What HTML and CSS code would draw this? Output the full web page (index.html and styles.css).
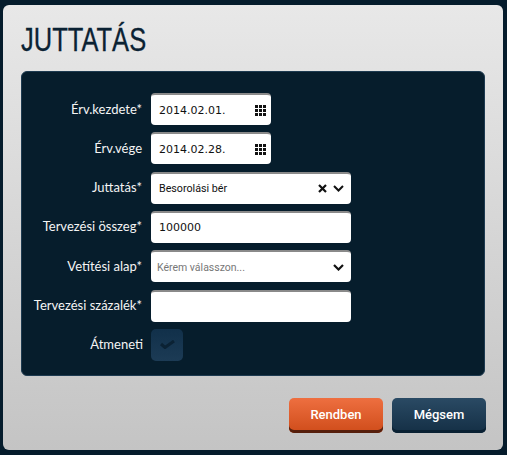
FILE: index.html
```html
<!DOCTYPE html>
<html>
<head>
    <title>Juttatás</title>
    <link rel="stylesheet" href="styles.css">
</head>
<body>
    <div class="modal">
        <h1>JUTTATÁS</h1>
        <form class="panel">
            <div class="row">
                <label>Érv.kezdete*</label>
                <div class="field short"><span class="value">2014.02.01.</span>
                    <svg class="icon" width="11" height="11" viewBox="0 0 11 11"><path d="M0 0h3v3H0zM4 0h3v3H4zM8 0h3v3H8zM0 4h3v3H0zM4 4h3v3H4zM8 4h3v3H8zM0 8h3v3H0zM4 8h3v3H4zM8 8h3v3H8z"/></svg>
                </div>
            </div>
            <div class="row">
                <label>Érv.vége</label>
                <div class="field short"><span class="value">2014.02.28.</span>
                    <svg class="icon" width="11" height="11" viewBox="0 0 11 11"><path d="M0 0h3v3H0zM4 0h3v3H4zM8 0h3v3H8zM0 4h3v3H0zM4 4h3v3H4zM8 4h3v3H8zM0 8h3v3H0zM4 8h3v3H4zM8 8h3v3H8z"/></svg>
                </div>
            </div>
            <div class="row">
                <label>Juttatás*</label>
                <div class="field"><span class="choice">Besorolási bér</span>
                    <svg class="icon" width="9" height="9" viewBox="0 0 9 9"><path d="M1 1l7 7M8 1L1 8" stroke="#111" stroke-width="2.2" fill="none"/></svg>
                    <svg class="icon chevron" width="11" height="7" viewBox="0 0 11 7"><path d="M1 1l4.500 4.500L10 1" stroke="#111" stroke-width="2" fill="none"/></svg>
                </div>
            </div>
            <div class="row">
                <label>Tervezési összeg*</label>
                <div class="field"><span class="value">100000</span></div>
            </div>
            <div class="row">
                <label>Vetítési alap*</label>
                <div class="field tight"><span class="choice hint">Kérem válasszon...</span>
                    <svg class="icon chevron" width="11" height="7" viewBox="0 0 11 7"><path d="M1 1l4.500 4.500L10 1" stroke="#111" stroke-width="2.200" fill="none"/></svg>
                </div>
            </div>
            <div class="row">
                <label>Tervezési százalék*</label>
                <div class="field"></div>
            </div>
            <div class="row">
                <label class="plain">Átmeneti</label>
                <div class="check">
                    <svg width="15" height="9" viewBox="0 0 15 9"><path d="M1 4l4 3.500L14 1" stroke="#0b2234" stroke-width="3" fill="none"/></svg>
                </div>
            </div>
        </form>
        <div class="actions">
            <button type="button" class="btn ok">Rendben</button>
            <button type="button" class="btn cancel">Mégsem</button>
        </div>
    </div>
</body>
</html>
```

FILE: styles.css
```css
html, body { margin: 0; height: 455px; overflow: hidden; }
body { background: #051c2c; padding: 5px 0 0 3px; box-sizing: border-box; font-family: Roboto, sans-serif; }
.modal { width: 500px; height: 445px; box-sizing: border-box; padding: 0 0 0 18px; border-radius: 6px; background: linear-gradient(#e8e8e8, #c4c4c4); }
h1 { margin: 0; height: 66px; line-height: 69px; font-family: "Liberation Sans", sans-serif; font-weight: normal; font-size: 34px; color: #0b2233; -webkit-text-stroke: .3px #0b2233; transform: scaleX(.75); transform-origin: left; }
.panel { width: 464px; height: 305px; box-sizing: border-box; padding: 21px 0 0; display: flex; flex-direction: column; gap: 7.33px; background: #061d2c; border: 1px solid #1d3a50; border-radius: 6px; }
.row { display: flex; align-items: center; gap: 9px; height: 32px; }
label { width: 120px; padding-bottom: 1px; text-align: right; font-family: Lato, sans-serif; font-size: 13px; color: #f4f4f4; }
.plain { width: 121px; margin-right: -1px; }
.field { width: 200px; height: 32px; box-sizing: border-box; padding: 0 5px 0 8px; display: flex; align-items: center; gap: 6px; background: #fff; border-top: 2px solid #8a8a8a; border-radius: 4px; }
.field.short { width: 120px; }
.tight { padding-left: 6px; }
.value { flex: 1; font-family: "DejaVu Sans", sans-serif; font-size: 11px; color: #111; }
.choice { flex: 1; font-size: 10.7px; color: #111; }
.hint { font-size: 10.5px; color: #777; }
.icon { flex: none; fill: #111; }
.chevron { margin-right: 2px; }
.check { width: 32px; height: 32px; display: flex; align-items: center; justify-content: center; background: linear-gradient(#11304a, #1c3b55); border-radius: 5px; }
.actions { display: flex; justify-content: flex-end; gap: 9px; width: 465px; margin-top: 22px; }
.btn { width: 94px; height: 35px; padding: 0 0 3px; border: none; border-radius: 5px; font-family: Roboto, sans-serif; font-size: 13px; font-weight: 500; color: #fff; }
.ok { background: linear-gradient(#ee6f40, #cf4c1a); box-shadow: inset 0 -3px 0 #561f0c; }
.cancel { background: linear-gradient(#2a4a64, #142f45); box-shadow: inset 0 -3px 0 #0a2133; }
```
